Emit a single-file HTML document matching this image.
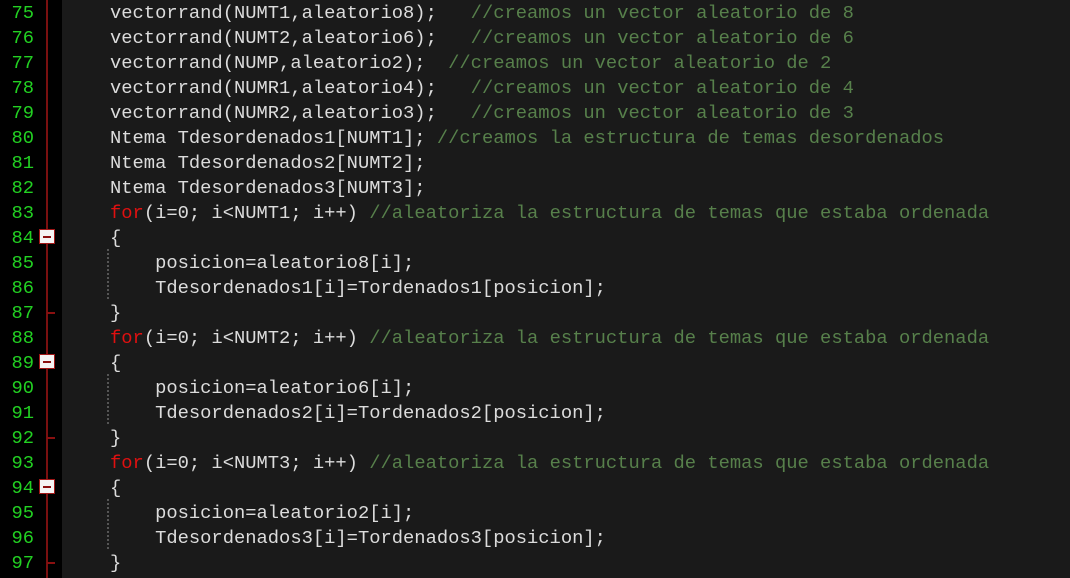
<!DOCTYPE html>
<html><head><meta charset="utf-8"><style>
html,body{margin:0;padding:0;width:1070px;height:578px;overflow:hidden;background:#1a1a1a}
#g{position:absolute;left:0;top:0;width:62px;height:578px;background:#000}
#fl{position:absolute;left:46px;top:0;width:2px;height:578px;background:#7a1010}
.n{position:absolute;left:0;width:34px;text-align:right;color:#22d022;font:18.8px/25px "Liberation Mono",monospace}
.c{position:absolute;left:110px;white-space:pre;color:#dcdcdc;font:18.8px/25px "Liberation Mono",monospace}
.k{color:#e01010}.m{color:#57804b}
.box{position:absolute;left:39px;width:14px;height:13px;border:1px solid #a01818;background:#f4f4f4}
.box:after{content:"";position:absolute;left:3px;right:3px;top:6px;height:2px;background:#8a1010}
.t{position:absolute;left:47px;width:8px;height:2px;background:#8a1010}
.gd{position:absolute;left:107px;width:0;border-left:2px dotted #555;height:50px}
</style></head><body>
<div id="g"></div><div id="fl"></div>
<div class="box" style="top:229px"></div>
<div class="box" style="top:354px"></div>
<div class="box" style="top:479px"></div>
<div class="t" style="top:312px"></div>
<div class="t" style="top:437px"></div>
<div class="t" style="top:562px"></div>
<div class="gd" style="top:249px"></div>
<div class="gd" style="top:374px"></div>
<div class="gd" style="top:499px"></div>
<div class="n" style="top:1px">75</div><div class="c" style="top:1px">vectorrand(NUMT1,aleatorio8);   <span class="m">//creamos un vector aleatorio de 8</span></div>
<div class="n" style="top:26px">76</div><div class="c" style="top:26px">vectorrand(NUMT2,aleatorio6);   <span class="m">//creamos un vector aleatorio de 6</span></div>
<div class="n" style="top:51px">77</div><div class="c" style="top:51px">vectorrand(NUMP,aleatorio2);  <span class="m">//creamos un vector aleatorio de 2</span></div>
<div class="n" style="top:76px">78</div><div class="c" style="top:76px">vectorrand(NUMR1,aleatorio4);   <span class="m">//creamos un vector aleatorio de 4</span></div>
<div class="n" style="top:101px">79</div><div class="c" style="top:101px">vectorrand(NUMR2,aleatorio3);   <span class="m">//creamos un vector aleatorio de 3</span></div>
<div class="n" style="top:126px">80</div><div class="c" style="top:126px">Ntema Tdesordenados1[NUMT1]; <span class="m">//creamos la estructura de temas desordenados</span></div>
<div class="n" style="top:151px">81</div><div class="c" style="top:151px">Ntema Tdesordenados2[NUMT2];</div>
<div class="n" style="top:176px">82</div><div class="c" style="top:176px">Ntema Tdesordenados3[NUMT3];</div>
<div class="n" style="top:201px">83</div><div class="c" style="top:201px"><span class="k">for</span>(i=0; i&lt;NUMT1; i++) <span class="m">//aleatoriza la estructura de temas que estaba ordenada</span></div>
<div class="n" style="top:226px">84</div><div class="c" style="top:226px">{</div>
<div class="n" style="top:251px">85</div><div class="c" style="top:251px">    posicion=aleatorio8[i];</div>
<div class="n" style="top:276px">86</div><div class="c" style="top:276px">    Tdesordenados1[i]=Tordenados1[posicion];</div>
<div class="n" style="top:301px">87</div><div class="c" style="top:301px">}</div>
<div class="n" style="top:326px">88</div><div class="c" style="top:326px"><span class="k">for</span>(i=0; i&lt;NUMT2; i++) <span class="m">//aleatoriza la estructura de temas que estaba ordenada</span></div>
<div class="n" style="top:351px">89</div><div class="c" style="top:351px">{</div>
<div class="n" style="top:376px">90</div><div class="c" style="top:376px">    posicion=aleatorio6[i];</div>
<div class="n" style="top:401px">91</div><div class="c" style="top:401px">    Tdesordenados2[i]=Tordenados2[posicion];</div>
<div class="n" style="top:426px">92</div><div class="c" style="top:426px">}</div>
<div class="n" style="top:451px">93</div><div class="c" style="top:451px"><span class="k">for</span>(i=0; i&lt;NUMT3; i++) <span class="m">//aleatoriza la estructura de temas que estaba ordenada</span></div>
<div class="n" style="top:476px">94</div><div class="c" style="top:476px">{</div>
<div class="n" style="top:501px">95</div><div class="c" style="top:501px">    posicion=aleatorio2[i];</div>
<div class="n" style="top:526px">96</div><div class="c" style="top:526px">    Tdesordenados3[i]=Tordenados3[posicion];</div>
<div class="n" style="top:551px">97</div><div class="c" style="top:551px">}</div>
</body></html>
